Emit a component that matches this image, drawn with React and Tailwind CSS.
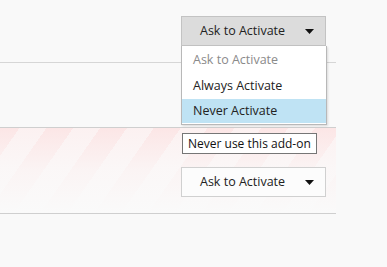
export default function App() {
  const caret = (
    <svg width="9" height="5" viewBox="0 0 9 5" className="shrink-0">
      <path d="M0 0 H9 L4.5 5 Z" fill="#111" />
    </svg>
  );

  return (
    <div className="relative h-[267px] w-[387px] overflow-hidden bg-[#f9f9f9] font-['Open_Sans',sans-serif] text-[12.5px] text-[#222]">
      <div className="w-[336px]">
        {/* top row */}
        <div className="flex h-[63px] items-start justify-end border-b border-[#d6d6d6] pr-[10px] pt-[16px]">
          <div className="flex h-[30px] w-[145px] items-center justify-between border border-[#c3c3c3] bg-[#dcdcdc] pl-[18px] pr-[11px]">
            <span>Ask to Activate</span>
            {caret}
          </div>
        </div>
        <div className="h-[65px] border-b border-[#cfcfcf]" />
        {/* striped row */}
        <div className="relative h-[86px] border-b border-[#cfcfcf] bg-[repeating-linear-gradient(-55deg,#fce6e6_0px,#fce6e6_22px,#fcf1f1_22px,#fcf1f1_44px)]">
          <div className="absolute inset-0 bg-gradient-to-b from-transparent via-[#fafafa]/70 to-[#fafafa]" />
          <div className="relative flex h-full items-start justify-end pr-[10px] pt-[39px]">
            <div className="flex h-[30px] w-[145px] items-center justify-between border border-[#d0d0d0] bg-[#fcfcfc] pl-[18px] pr-[11px]">
              <span>Ask to Activate</span>
              {caret}
            </div>
          </div>
        </div>
      </div>

      {/* dropdown menu */}
      <div className="absolute left-[181px] top-[46px] w-[146px] border border-[#b8b8b8] border-t-0 bg-white py-[1px] shadow-[1px_1px_2px_rgba(0,0,0,0.12)]">
        <div className="flex h-[26px] items-center pl-[11px] text-[#8a8a8a]">Ask to Activate</div>
        <div className="flex h-[26px] items-center pl-[11px]">Always Activate</div>
        <div className="flex h-[24px] items-center bg-[#bfe3f4] pl-[11px]">Never Activate</div>
      </div>

      {/* tooltip */}
      <div className="absolute left-[182px] top-[133px] flex h-[21px] items-center border border-[#767676] bg-white px-[5px] text-[12px] text-[#111]">
        Never use this add-on
      </div>
    </div>
  );
}
